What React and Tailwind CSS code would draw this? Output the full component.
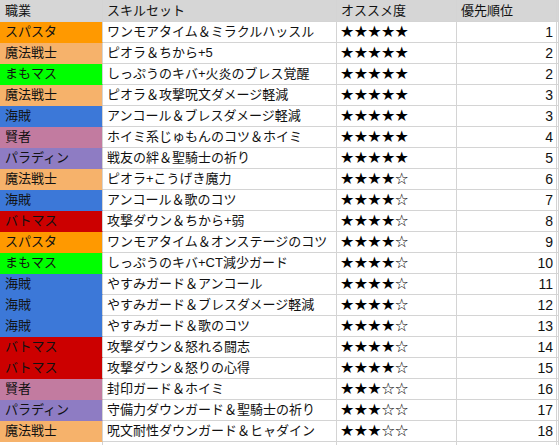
import React from 'react'

// job colours, full class strings so Tailwind picks them up
const jobs = {
  スパスタ: 'bg-[#ff9900] border-b-[#ff9900]',
  魔法戦士: 'bg-[#f6b26b] border-b-[#f6b26b]',
  まもマス: 'bg-[#00ff00] border-b-[#00ff00]',
  海賊: 'bg-[#3c78d8] border-b-[#3c78d8]',
  賢者: 'bg-[#c27ba0] border-b-[#c27ba0]',
  パラディン: 'bg-[#8e7cc3] border-b-[#8e7cc3]',
  バトマス: 'bg-[#cc0000] border-b-[#cc0000]',
}

const rows = [
  ['スパスタ', 'ワンモアタイム＆ミラクルハッスル', 5, 1],
  ['魔法戦士', 'ピオラ＆ちから+5', 5, 2],
  ['まもマス', 'しっぷうのキバ+火炎のブレス覚醒', 5, 2],
  ['魔法戦士', 'ピオラ＆攻撃呪文ダメージ軽減', 5, 3],
  ['海賊', 'アンコール＆ブレスダメージ軽減', 5, 3],
  ['賢者', 'ホイミ系じゅもんのコツ＆ホイミ', 5, 4],
  ['パラディン', '戦友の絆＆聖騎士の祈り', 5, 5],
  ['魔法戦士', 'ピオラ+こうげき魔力', 4, 6],
  ['海賊', 'アンコール＆歌のコツ', 4, 7],
  ['バトマス', '攻撃ダウン＆ちから+弱', 4, 8],
  ['スパスタ', 'ワンモアタイム＆オンステージのコツ', 4, 9],
  ['まもマス', 'しっぷうのキバ+CT減少ガード', 4, 10],
  ['海賊', 'やすみガード＆アンコール', 4, 11],
  ['海賊', 'やすみガード＆ブレスダメージ軽減', 4, 12],
  ['海賊', 'やすみガード＆歌のコツ', 4, 13],
  ['バトマス', '攻撃ダウン＆怒れる闘志', 4, 14],
  ['バトマス', '攻撃ダウン＆怒りの心得', 4, 15],
  ['賢者', '封印ガード＆ホイミ', 3, 16],
  ['パラディン', '守備力ダウンガード＆聖騎士の祈り', 3, 17],
  ['魔法戦士', '呪文耐性ダウンガード＆ヒャダイン', 3, 18],
]

const cell = 'border-r border-b border-[#d4d4d4] flex items-center overflow-hidden whitespace-nowrap'

export default function App() {
  return (
    <div
      className="w-[559px] h-[445px] overflow-hidden bg-white text-[13px] text-[#111]"
      style={{ fontFamily: '"Liberation Sans", "Noto Sans CJK JP", sans-serif' }}
    >
      <div className="grid grid-cols-[103px_234px_120px_100px_2px]">
        {/* header */}
        <div className={`${cell} h-[22px] bg-[#d6d6d6] pl-[5px]`}>職業</div>
        <div className={`${cell} h-[22px] bg-[#d6d6d6] pl-[4px]`}>スキルセット</div>
        <div className={`${cell} h-[22px] bg-[#d6d6d6] pl-[4px]`}>オススメ度</div>
        <div className={`${cell} h-[22px] bg-[#d6d6d6] pl-[4px]`}>優先順位</div>
        <div className={`${cell} h-[22px] bg-[#d6d6d6]`} />

        {rows.map(([job, skill, stars, rank], i) => (
          <React.Fragment key={i}>
            <div className={`${cell} h-[21px] pl-[5px] ${jobs[job]}`}>{job}</div>
            <div className={`${cell} h-[21px] pl-[4px]`}>{skill}</div>
            <div className={`${cell} h-[21px] pl-[3px] text-[16px] tracking-[-0.7px] text-black`} style={{ fontFamily: '"DejaVu Sans", sans-serif' }}>
              {'★'.repeat(stars) + '☆'.repeat(5 - stars)}
            </div>
            <div className={`${cell} h-[21px] justify-end pr-[3px] text-[14px]`}>{rank}</div>
            <div className={`${cell} h-[21px]`} />
          </React.Fragment>
        ))}

        <div className={`${cell} h-[21px]`} />
        <div className={`${cell} h-[21px]`} />
        <div className={`${cell} h-[21px]`} />
        <div className={`${cell} h-[21px]`} />
        <div className={`${cell} h-[21px]`} />
      </div>
    </div>
  )
}
